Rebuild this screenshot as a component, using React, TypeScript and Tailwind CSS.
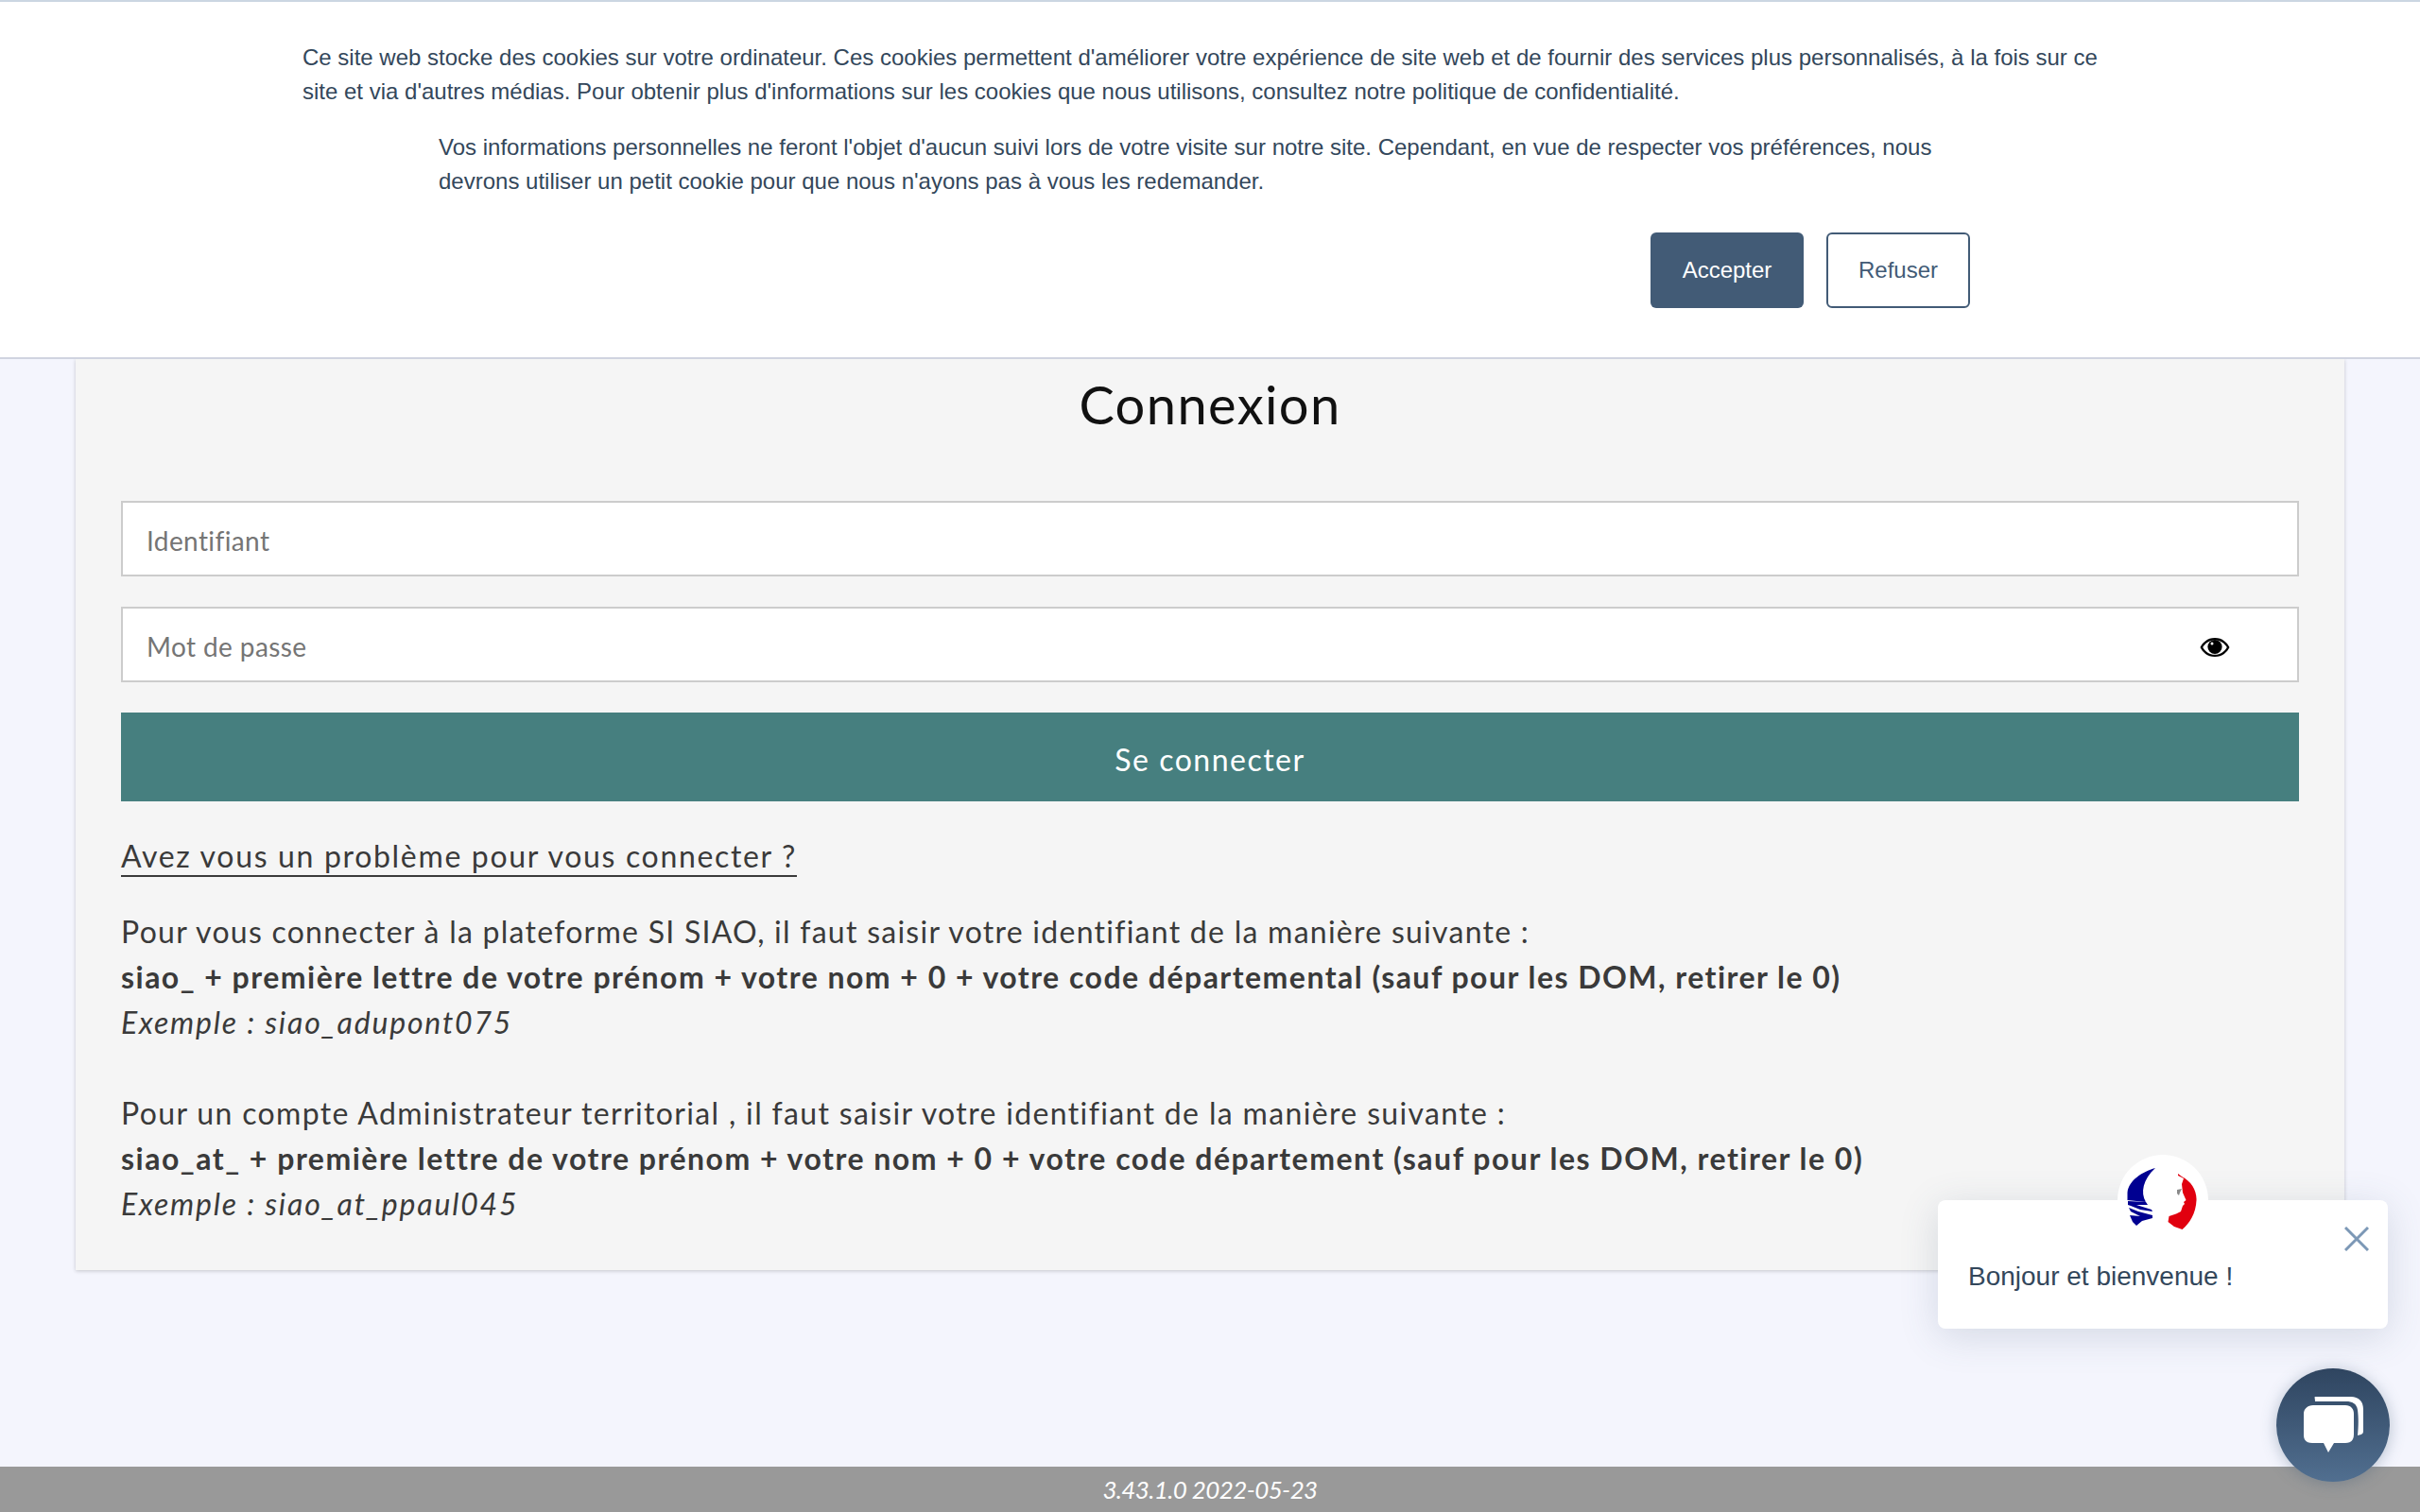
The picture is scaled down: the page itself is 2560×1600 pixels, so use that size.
import React from "react";

const formFont = { fontFamily: "Lato, sans-serif" };

function Marianne() {
  return (
    <svg viewBox="0 0 96 96" className="w-[96px] h-[96px]">
      <path d="M40 14 C 26 18, 12 27, 10.5 40 L 10.5 48 L 30 50 C 24 40, 27 26, 40 14 Z" fill="#000091" />
      <path d="M11 49 L 30 50 L 32 53 L 20 53 L 36 58 L 37 60 L 24 58 L 14 54 L 11 53 Z" fill="#000091" />
      <path d="M12 56 L 22 60 L 37 64 L 37 67 L 26 70 L 20 75 L 16 71 L 13 64 L 24 65 L 14 60 Z" fill="#000091" />
      <path d="M64 20 L 68 23 C 78 28, 84 38, 83.5 48 C 83 62, 76 73, 68.5 79 L 60 76 L 53.5 71 L 54.5 65 L 62 62.5 L 67 60 L 69 54 L 71 52 L 70 50 L 72.5 48 L 69 40 L 68 31 L 70 25 L 64 22 Z" fill="#e1000f" />
      <path d="M63 37 L 68 36 L 66 40 L 65 43 L 63 41 Z" fill="#8a8a8a" />
    </svg>
  );
}

function ChatIcon() {
  return (
    <svg viewBox="0 0 64 60" className="w-[64px] h-[60px] translate-x-[1px]">
      <path d="M12 0 H50 C58 0 63 5 63 13 V36 C63 39 62 40 57 41 C58 30 58 22 57 14 C56 7 51 5 45 5 H12 C12 2 11 0 12 0 Z" fill="#fff" />
      <path d="M10 9 H44 C50 9 53 13 53 18 V40 C53 46 50 49 44 49 H32 L26 59 L21 49 H9 C3 49 0 46 0 41 V18 C0 13 4 9 10 9 Z" fill="#fff" />
    </svg>
  );
}

function Eye() {
  return (
    <svg viewBox="0 0 32 22" className="w-[32px] h-[22px] translate-y-[3px]">
      <path d="M16 1 C 24 1, 29 6, 31.5 11 C 29 16, 24 21, 16 21 C 8 21, 3 16, 0.5 11 C 3 6, 8 1, 16 1 Z M16 3.2 C 10 3.2, 5.5 7, 3.2 11 C 5.5 15, 10 18.8, 16 18.8 C 22 18.8, 26.5 15, 28.8 11 C 26.5 7, 22 3.2, 16 3.2 Z" fill="#000" fillRule="evenodd" />
      <circle cx="16" cy="10.5" r="7.6" fill="#000" />
      <circle cx="13" cy="7" r="1.5" fill="#fff" />
    </svg>
  );
}

function Field({ placeholder, children }: { placeholder: string; children?: React.ReactNode }) {
  return (
    <div className="flex h-[80px] items-center justify-between bg-white border-2 border-[#cccccc] pl-[24px] pr-[71px]">
      <span className="text-[28px] text-[#757575] tracking-[0.4px] ml-[1px] pt-[3px]" style={formFont}>{placeholder}</span>
      {children}
    </div>
  );
}

export default function App() {
  return (
    <div className="relative min-h-[1600px] h-[1600px] overflow-hidden bg-[#f4f5fd] flex flex-col" style={formFont}>
      <main className="flex-1 px-[80px] pt-[380px]">
        <section className="bg-[#f5f5f5] shadow-[0_1px_4px_rgba(0,0,0,0.2)] h-[964px] px-[48px]">
          <h1 className="text-center text-[56px] leading-[72px] tracking-[1.4px] text-[#111111] pt-[12px] pb-[2px]">Connexion</h1>
          <div className="mt-[64px] flex flex-col gap-[32px]">
            <Field placeholder="Identifiant" />
            <Field placeholder="Mot de passe"><Eye /></Field>
          </div>
          <button className="mt-[32px] w-full h-[94px] bg-[#467f7f] text-white text-[32px] tracking-[1.5px] pt-[6px]">Se connecter</button>
          <div className="mt-[34px] text-[#3a3a3a] text-[32px] leading-[48px]">
            <a className="inline-block border-b-2 border-[#3a3a3a] leading-[41px] tracking-[1.67px]">Avez vous un problème pour vous connecter ?</a>
            <div className="mt-[32px]">
              <p className="tracking-[1.26px]">Pour vous connecter à la plateforme SI SIAO, il faut saisir votre identifiant de la manière suivante :</p>
              <p className="font-bold tracking-[1.47px]">siao_ + première lettre de votre prénom + votre nom + 0 + votre code départemental (sauf pour les DOM, retirer le 0)</p>
              <p className="italic tracking-[1.8px]">Exemple : siao_adupont075</p>
              <p className="mt-[48px] tracking-[1.35px]">Pour un compte Administrateur territorial , il faut saisir votre identifiant de la manière suivante :</p>
              <p className="font-bold tracking-[1.5px]">siao_at_ + première lettre de votre prénom + votre nom + 0 + votre code département (sauf pour les DOM, retirer le 0)</p>
              <p className="italic tracking-[1.8px]">Exemple : siao_at_ppaul045</p>
            </div>
          </div>
        </section>
      </main>
      <footer className="h-[48px] bg-[#999999] flex items-center justify-center text-white italic text-[26px] tracking-[-0.6px]">3.43.1.0 2022-05-23</footer>

      <div className="absolute top-0 left-0 right-0 h-[380px] bg-white border-t-2 border-b-2 border-t-[#cbd6e2] border-b-[#d0d4e0] text-[24px] leading-[36px] text-[#33475b]" style={{ fontFamily: '"Liberation Sans", sans-serif' }}>
        <div className="pl-[320px] pr-[320px] pt-[41px]">
          <p>Ce site web stocke des cookies sur votre ordinateur. Ces cookies permettent d'améliorer votre expérience de site web et de fournir des services plus personnalisés, à la fois sur ce site et via d'autres médias. Pour obtenir plus d'informations sur les cookies que nous utilisons, consultez notre politique de confidentialité.</p>
        </div>
        <div className="pl-[464px] pr-[464px] mt-[23px]">
          <p>Vos informations personnelles ne feront l'objet d'aucun suivi lors de votre visite sur notre site. Cependant, en vue de respecter vos préférences, nous devrons utiliser un petit cookie pour que nous n'ayons pas à vous les redemander.</p>
          <div className="flex justify-end gap-[24px] mt-[36px] mr-[12px]">
            <button className="w-[162px] h-[80px] rounded-[6px] bg-[#425b76] text-white">Accepter</button>
            <button className="w-[152px] h-[80px] rounded-[6px] bg-white border-2 border-[#425b76] text-[#425b76]">Refuser</button>
          </div>
        </div>
      </div>

      <div className="absolute left-[2050px] top-[1270px] w-[476px] h-[136px] bg-white rounded-[8px] shadow-[0_8px_40px_rgba(66,91,118,0.18)] px-[32px] pt-[63px] text-[28px] leading-[36px] text-[#33475b]" style={{ fontFamily: '"Liberation Sans", sans-serif' }}>
        Bonjour et bienvenue !
        <div className="absolute left-[190px] top-[-48px] w-[96px] h-[96px] rounded-full bg-white"><Marianne /></div>
        <svg viewBox="0 0 26 26" className="absolute left-[430px] top-[28px] w-[26px] h-[26px]">
          <path d="M1 1 L25 25 M25 1 L1 25" stroke="#7c98b6" strokeWidth="3" fill="none" />
        </svg>
      </div>

      <div className="absolute left-[2408px] top-[1448px] w-[120px] h-[120px] rounded-full bg-gradient-to-b from-[#2f4560] to-[#516f90] shadow-[0_2px_16px_rgba(66,91,118,0.35)] flex items-center justify-center">
        <ChatIcon />
      </div>
    </div>
  );
}
